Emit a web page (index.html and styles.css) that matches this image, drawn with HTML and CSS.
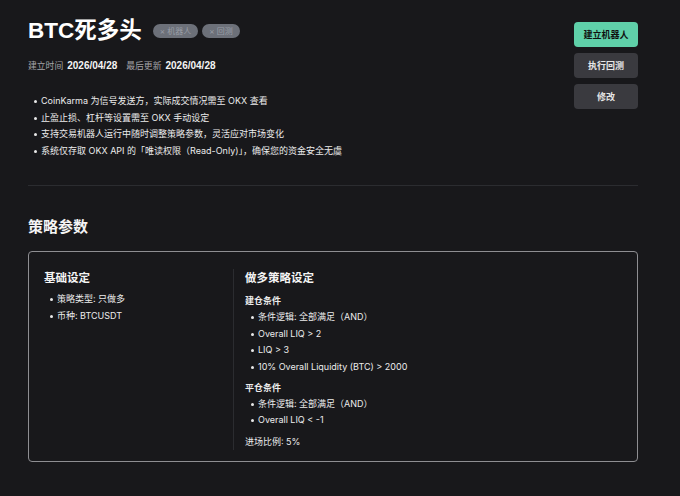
FILE: index.html
```html
<!DOCTYPE html>
<html lang="zh">
<head>
<meta charset="utf-8">
<link rel="stylesheet" href="styles.css">
</head>
<body>
<div class="page">
  <header class="top">
    <div class="info">
      <div class="title-row">
        <h1 class="title">BTC死多头</h1>
        <span class="tag">× 机器人</span>
        <span class="tag">× 回测</span>
      </div>
      <div class="meta">
        <span class="label">建立时间</span><span class="value">2026/04/28</span>
        <span class="label">最后更新</span><span class="value">2026/04/28</span>
      </div>
      <ul class="notes">
        <li>CoinKarma 为信号发送方，实际成交情况需至 OKX 查看</li>
        <li>止盈止损、杠杆等设置需至 OKX 手动设定</li>
        <li>支持交易机器人运行中随时调整策略参数，灵活应对市场变化</li>
        <li>系统仅存取 OKX API 的「唯读权限（Read-Only)」，确保您的资金安全无虞</li>
      </ul>
    </div>
    <div class="actions">
      <button class="btn primary">建立机器人</button>
      <button class="btn">执行回测</button>
      <button class="btn">修改</button>
    </div>
  </header>
  <hr class="divider">
  <h2 class="section-title">策略参数</h2>
  <div class="card">
    <div class="col left">
      <h3 class="col-title">基础设定</h3>
      <ul class="items">
        <li>策略类型: 只做多</li>
        <li>币种: BTCUSDT</li>
      </ul>
    </div>
    <div class="col right">
      <h3 class="col-title">做多策略设定</h3>
      <div class="sub first">建仓条件</div>
      <ul class="items">
        <li>条件逻辑: 全部满足（AND）</li>
        <li>Overall LIQ &gt; 2</li>
        <li>LIQ &gt; 3</li>
        <li>10% Overall Liquidity (BTC) &gt; 2000</li>
      </ul>
      <div class="sub">平仓条件</div>
      <ul class="items">
        <li>条件逻辑: 全部满足（AND）</li>
        <li>Overall LIQ &lt; -1</li>
      </ul>
      <div class="ratio">进场比例: 5%</div>
    </div>
  </div>
</div>
</body>
</html>
```

FILE: styles.css
```css
* { box-sizing: border-box; }
html, body {
  margin: 0;
  padding: 0;
  background: #18181b;
  color: #f2f2f2;
  font-family: "Inter", "Noto Sans CJK SC", sans-serif;
}
.page {
  padding: 18px 42px 0 28px;
  width: 680px;
}
.top {
  display: flex;
  justify-content: space-between;
  align-items: flex-start;
}
.title-row {
  display: flex;
  align-items: center;
  gap: 4px;
}
.title {
  margin: 0 7px 0 0;
  font-size: 22.5px;
  font-weight: 700;
  line-height: 26px;
  color: #ffffff;
  font-family: "Liberation Sans", "Noto Sans CJK SC", sans-serif;
}
.tag {
  display: inline-flex;
  align-items: center;
  height: 14px;
  padding: 0 7px;
  border-radius: 7px;
  background: #6c7079;
  color: #9a9ea7;
  font-size: 8px;
  line-height: 14px;
}
.meta {
  margin-top: 15px;
  line-height: 14px;
  display: flex;
  align-items: baseline;
}
.meta .label { color: #a4a4a8; font-size: 8.8px; margin-right: 4px; }
.meta .value {
  color: #f4f4f4;
  font-weight: 700;
  font-size: 10px;
  margin-right: 9px;
  font-family: "Liberation Sans", sans-serif;
}
.notes {
  margin: 20px 0 0 0;
  padding: 0;
  list-style: none;
  font-size: 9px;
  line-height: 16.7px;
  color: #ececec;
}
.notes li,
.items li {
  position: relative;
  padding-left: 13px;
}
.notes li::before,
.items li::before {
  content: "";
  position: absolute;
  left: 6px;
  top: 7px;
  width: 3px;
  height: 3px;
  border-radius: 50%;
  background: #e8e8e8;
}
.actions {
  display: flex;
  flex-direction: column;
  gap: 6px;
  margin-top: 4px;
}
.btn {
  width: 64px;
  height: 25px;
  border: none;
  border-radius: 4px;
  background: #3a3a3f;
  color: #e6e6e6;
  font-family: "Inter", "Noto Sans CJK SC", sans-serif;
  font-size: 9px;
  font-weight: 700;
  padding: 0;
}
.btn.primary {
  background: #5fd0a9;
  color: #101010;
}
.divider {
  margin: 25px 0 0 0;
  border: none;
  border-top: 1px solid #2b2c30;
  height: 0;
}
.section-title {
  margin: 30px 0 0 0;
  font-size: 15px;
  line-height: 22px;
  font-weight: 700;
  color: #f4f4f4;
}
.card {
  margin-top: 13px;
  border: 1px solid #8e8e92;
  border-radius: 4px;
  height: 211px;
  padding: 17px 16px 15px 15px;
  display: grid;
  grid-template-columns: 189px 1fr;
}
.col-title {
  margin: 0 0 4px 0;
  font-size: 11.5px;
  line-height: 18px;
  font-weight: 700;
  color: #f4f4f4;
}
.right {
  border-left: 1px solid #2b2c30;
  padding-left: 11px;
}
.items {
  margin: 0;
  padding: 0;
  list-style: none;
  font-size: 9px;
  line-height: 16.7px;
  color: #ececec;
}
.sub {
  font-size: 9px;
  font-weight: 700;
  line-height: 16px;
  margin-top: 4px;
  margin-bottom: 0;
  color: #ececec;
}
.sub.first { margin-top: 6px; }
.ratio {
  font-size: 9px;
  line-height: 16px;
  margin-top: 5px;
  color: #ececec;
}
```
